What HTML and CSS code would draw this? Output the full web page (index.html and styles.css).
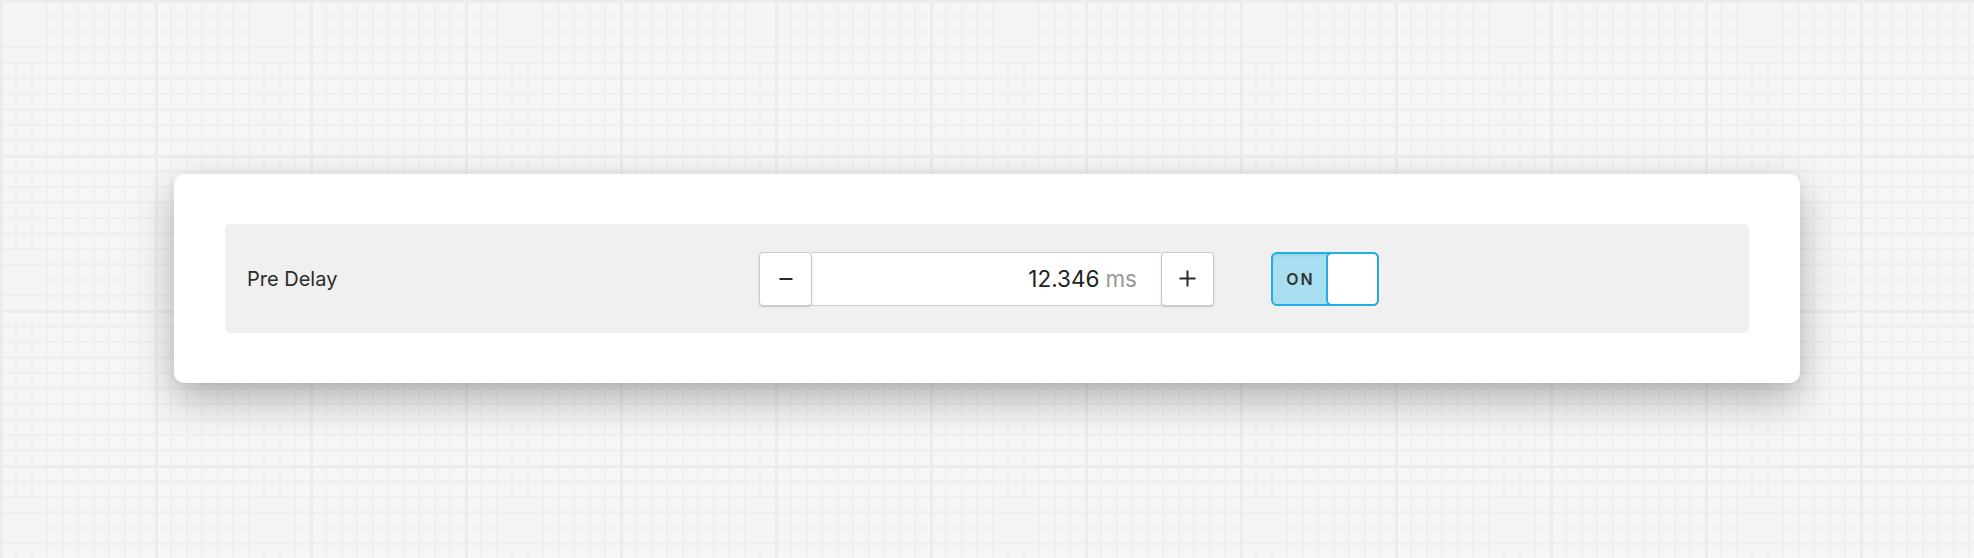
FILE: index.html
```html
<!DOCTYPE html>
<html lang="en">
<head>
  <meta charset="UTF-8">
  <title>Pre Delay</title>
  <link rel="stylesheet" href="styles.css">
</head>
<body>
<div class="page">
  <div class="panel">
    <div class="param-row">
      <div class="param-label">Pre Delay</div>
      <div class="stepper">
        <button class="step-btn minus" aria-label="decrease">
          <svg width="14" height="14" viewBox="0 0 14 14"><path d="M0.5 7h13" stroke="#2a2a2a" stroke-width="2"/></svg>
        </button>
        <div class="step-value">12.346<span class="unit">ms</span></div>
        <button class="step-btn plus" aria-label="increase">
          <svg width="17" height="17" viewBox="0 0 17 17"><path d="M0.5 8.5h16M8.5 0.5v16" stroke="#2a2a2a" stroke-width="2"/></svg>
        </button>
      </div>
      <div class="toggle">
        <span class="toggle-text">ON</span>
        <span class="toggle-knob"></span>
      </div>
    </div>
  </div>
</div>
</body>
</html>
```

FILE: styles.css
```css
html, body {
  margin: 0;
  padding: 0;
}

body {
  width: 1974px;
  height: 558px;
  overflow: hidden;
  font-family: Inter, "Liberation Sans", sans-serif;
  background-color: #f6f6f6;
  background-image:
    repeating-linear-gradient(to right, #ececec 0, #ececec 3px, transparent 3px, transparent 155px),
    repeating-linear-gradient(to bottom, #ececec 0, #ececec 3px, transparent 3px, transparent 155px),
    repeating-linear-gradient(to right, #f0f0f0 0, #f0f0f0 2px, transparent 2px, transparent 15.5px),
    repeating-linear-gradient(to bottom, #f0f0f0 0, #f0f0f0 2px, transparent 2px, transparent 15.5px);
}

.page {
  padding: 174px 174px 0 174px;
}

.panel {
  background: #fff;
  border-radius: 10px;
  padding: 50px 51px;
  box-shadow: 0 16px 40px rgba(0, 0, 0, 0.28), 0 2px 6px rgba(0, 0, 0, 0.06);
}

.param-row {
  display: flex;
  align-items: center;
  height: 109px;
  padding-left: 22px;
  background: #f0f0f0;
  border-radius: 5px;
}

.param-label {
  width: 512px;
  font-size: 20px;
  color: #2b2b2b;
}

.stepper {
  display: flex;
  height: 54px;
  width: 455px;
}

.step-btn {
  width: 53px;
  height: 54px;
  padding: 0;
  background: #fff;
  border: 1px solid #c9c9c9;
  border-radius: 4px;
  box-shadow: 0 1px 2px rgba(0, 0, 0, 0.18);
  display: flex;
  align-items: center;
  justify-content: center;
  position: relative;
  z-index: 1;
}

.step-btn svg {
  display: block;
}

.step-value {
  flex: 1;
  background: #fff;
  border-top: 1px solid #cccccc;
  border-bottom: 1px solid #cccccc;
  display: flex;
  align-items: center;
  justify-content: flex-end;
  padding-right: 24px;
  font-size: 22.5px;
  color: #222;
}

.unit {
  color: #999;
  margin-left: 6px;
}

.toggle {
  margin-left: 57px;
  display: flex;
  width: 108px;
  height: 54px;
  box-sizing: border-box;
  border: 2px solid #22ace0;
  border-radius: 6px;
  background: #a7dff0;
  box-shadow: inset 0 2px 2px rgba(0, 0, 0, 0.06);
}

.toggle-text {
  flex: 1;
  display: flex;
  align-items: center;
  justify-content: center;
  padding-left: 2px;
  font-size: 16px;
  font-weight: 600;
  letter-spacing: 2px;
  color: #333;
}

.toggle-knob {
  width: 53px;
  margin: -2px -2px -2px 0;
  box-sizing: border-box;
  background: #fff;
  border: 2px solid #22ace0;
  border-radius: 6px;
}
```
